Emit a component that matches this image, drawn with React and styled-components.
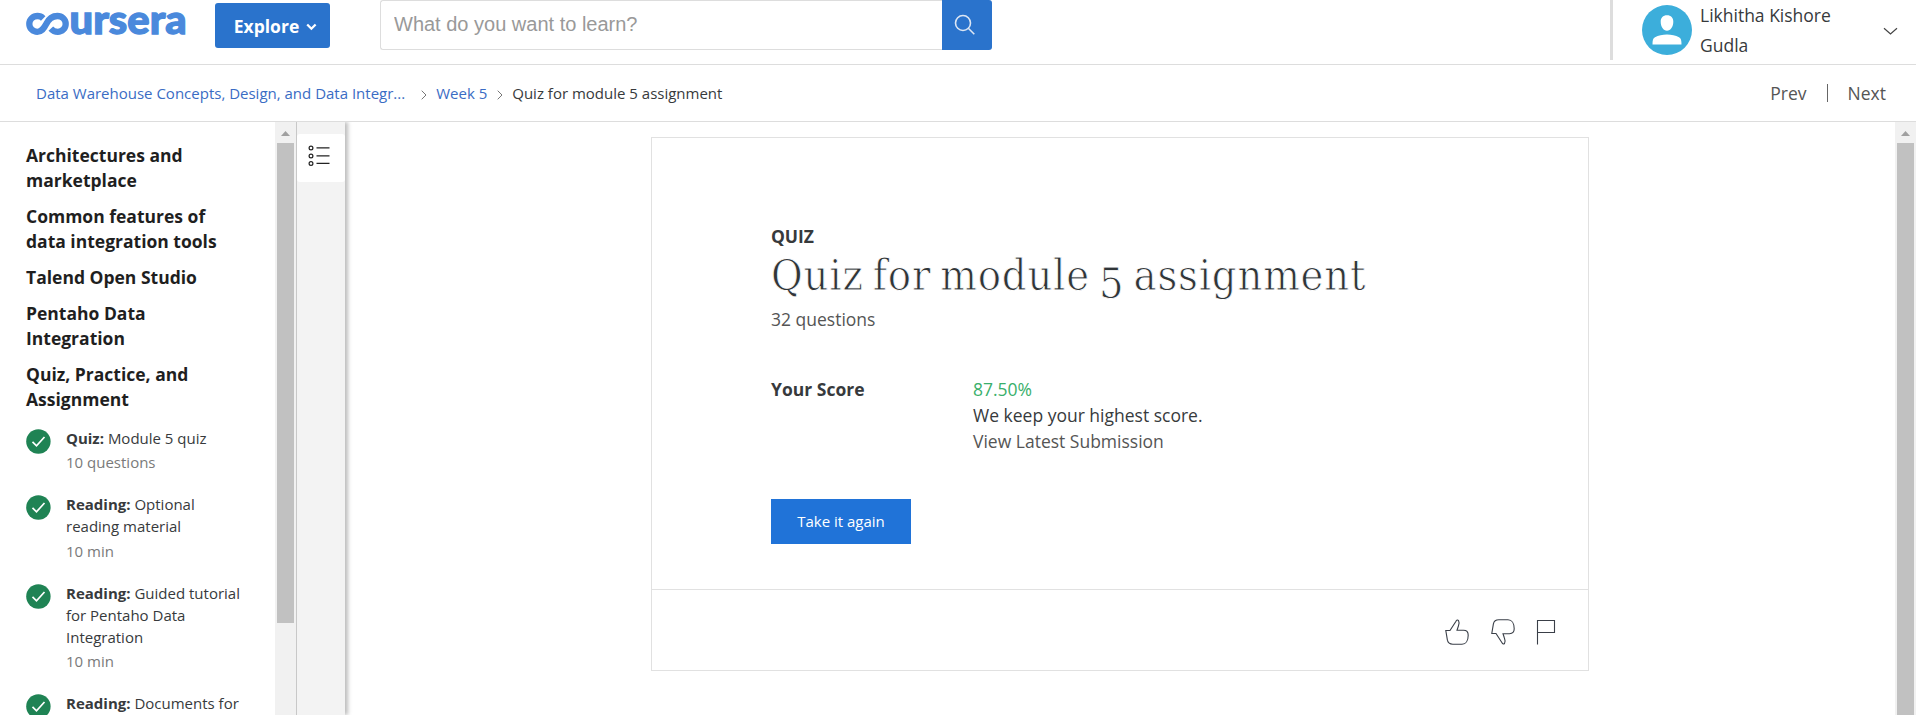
import React from "react";
import styled, { createGlobalStyle } from "styled-components";

const GlobalStyle = createGlobalStyle`
  * { box-sizing: border-box; }
  html, body { margin: 0; height: 100%; overflow: hidden; background: #fff; }
  body { font-family: "Open Sans", sans-serif; color: #373a3c; }
  button { font-family: inherit; border: 0; padding: 0; cursor: pointer; }
`;

const Page = styled.div`
  display: flex;
  flex-direction: column;
  height: 715px;
  overflow: hidden;
`;

const Header = styled.header`
  display: flex;
  align-items: flex-start;
  height: 65px;
  flex: none;
  padding-left: 26px;
  border-bottom: 1px solid #ddd;
`;

const Logo = styled.svg`
  display: block;
  width: 160px;
  height: 24px;
  margin-top: 12px;
  overflow: visible;
`;

const ExploreButton = styled.button`
  display: flex;
  align-items: center;
  justify-content: center;
  gap: 7px;
  width: 115px;
  height: 45px;
  margin: 3px 0 0 29px;
  padding-left: 6px;
  border-radius: 3px;
  background: #2a73cc;
  color: #fff;
  font-size: 17.5px;
  font-weight: 700;
  svg { margin-top: 3px; }
`;

const SearchBar = styled.div`
  display: flex;
  width: 612px;
  height: 50px;
  margin-left: 50px;
`;

const SearchInput = styled.input`
  flex: 1;
  min-width: 0;
  padding: 0 13px 2px;
  border: 1px solid #ddd;
  border-right: 0;
  border-radius: 3px 0 0 3px;
  outline: 0;
  font: 20px "Liberation Sans", Arial, sans-serif;
  &::placeholder { color: #999; opacity: 1; }
`;

const SearchButton = styled.button`
  display: flex;
  align-items: center;
  justify-content: center;
  width: 50px;
  padding-right: 4px;
  border-radius: 0 3px 3px 0;
  background: #2a73cc;
`;

const UserMenu = styled.div`
  display: flex;
  align-items: flex-start;
  width: 306px;
  height: 60px;
  margin-left: auto;
  border-left: 3px solid #ddd;
  padding: 0 18px 0 29px;
`;

const Avatar = styled.svg`
  flex: none;
  margin-top: 5px;
`;

const UserName = styled.span`
  width: 150px;
  margin-left: 8px;
  font-size: 17.5px;
  line-height: 30px;
`;

const MenuArrow = styled.svg`
  margin: 27px 0 0 auto;
`;

const CrumbBar = styled.nav`
  display: flex;
  align-items: center;
  height: 57px;
  flex: none;
  padding: 0 30px 0 36px;
  border-bottom: 1px solid #ddd;
  font-size: 15px;
`;

const Crumb = styled.span`
  color: ${(p) => (p.$link ? "#3a6cc4" : "#373a3c")};
  white-space: nowrap;
`;

const CrumbArrow = styled.svg`
  margin: 3px 9px 0 ${(p) => p.$before}px;
`;

const Pager = styled.div`
  display: flex;
  align-items: center;
  margin-left: auto;
  font-size: 17.5px;
  color: #555;
`;

const PagerDivider = styled.i`
  width: 1px;
  height: 18px;
  margin: 0 20px;
  background: #666;
`;

const Body = styled.div`
  display: flex;
  flex: 1;
  min-height: 0;
`;

const Sidebar = styled.aside`
  display: flex;
  width: 297px;
  flex: none;
  border-right: 1px solid #c8c8c8;
  overflow: hidden;
`;

const Outline = styled.div`
  width: 275px;
  flex: none;
  padding: 21px 20px 0 26px;
`;

const Section = styled.h3`
  width: 205px;
  margin: 0 0 11px;
  font-size: 17.5px;
  font-weight: 700;
  line-height: 25px;
  color: #1f1f1f;
`;

const ItemList = styled.ul`
  margin: 15px 0 0;
  padding: 0;
  list-style: none;
`;

const Item = styled.li`
  display: flex;
  gap: 15px;
  padding-bottom: 20.3px;
  svg { flex: none; margin: 2px 0 0; }
`;

const ItemText = styled.div`
  width: 182px;
  font-size: 15px;
  line-height: 22px;
  b { font-weight: 700; }
`;

const ItemMeta = styled.div`
  margin-top: 2.2px;
  color: #7a7a7a;
`;

const ScrollTrack = styled.div`
  display: flex;
  flex-direction: column;
  align-items: center;
  width: 21px;
  flex: none;
  background: #f1f1f1;
  svg { display: block; flex: none; margin: 9px 0 7px; }
`;

const ScrollThumb = styled.div`
  width: 17px;
  height: ${(p) => p.$height};
  background: #c1c1c1;
`;

const Rail = styled.div`
  width: 48px;
  flex: none;
  padding-top: 12px;
  background: #f3f3f3;
  box-shadow: 3px 0 4px rgba(0, 0, 0, 0.26);
  clip-path: inset(0 -10px 0 0);
`;

const RailTab = styled.button`
  display: flex;
  align-items: center;
  justify-content: center;
  width: 48px;
  height: 48px;
  padding: 0 4px 5px 0;
  border-radius: 3px;
  background: #fff;
`;

const Main = styled.main`
  flex: 1;
  padding: 15px 0 0 306px;
`;

const Card = styled.section`
  display: flex;
  flex-direction: column;
  width: 938px;
  height: 534px;
  border: 1px solid #e1e1e1;
`;

const CardContent = styled.div`
  height: 451px;
  padding: 85px 119px 0;
`;

const Kind = styled.div`
  font-size: 17.5px;
  font-weight: 700;
  letter-spacing: -0.1px;
  line-height: 26px;
`;

const Title = styled.h1`
  height: 55px;
  margin: 0;
  font-family: "DejaVu Serif Condensed", "DejaVu Serif", serif;
  font-stretch: condensed;
  font-size: 43px;
  font-weight: 400;
  line-height: 52px;
  letter-spacing: 0.8px;
  word-spacing: -4px;
  white-space: nowrap;
  color: #303538;
  -webkit-text-stroke: 0.8px #fff;
`;

const OldStyleFigure = styled.span`
  display: inline-block;
  vertical-align: -8px;
  line-height: 1;
`;

const QuestionCount = styled.div`
  margin-top: 2px;
  font-size: 17.5px;
  line-height: 26px;
  color: #555;
`;

const ScoreGrid = styled.div`
  display: grid;
  grid-template-columns: 202px 1fr;
  margin-top: 44px;
  font-size: 17.5px;
  line-height: 26px;
`;

const ScoreLabel = styled.div`
  font-weight: 700;
`;

const ScoreLine = styled.div`
  color: ${(p) => p.$color || "#373a3c"};
`;

const PrimaryButton = styled.button`
  display: block;
  width: 140px;
  height: 45px;
  margin-top: 45px;
  padding-bottom: 2px;
  background: #2073d8;
  color: #fff;
  font-size: 15px;
  font-weight: 500;
`;

const CardFooter = styled.footer`
  display: flex;
  align-items: center;
  justify-content: flex-end;
  flex: 1;
  gap: 21.5px;
  padding: 4px 32px 0 0;
  border-top: 1px solid #e1e1e1;
`;

const sections = [
  "Architectures and marketplace",
  "Common features of data integration tools",
  "Talend Open Studio",
  "Pentaho Data Integration",
  "Quiz, Practice, and Assignment",
];

const items = [
  { kind: "Quiz:", title: "Module 5 quiz", meta: "10 questions" },
  { kind: "Reading:", title: "Optional reading material", meta: "10 min" },
  { kind: "Reading:", title: "Guided tutorial for Pentaho Data Integration", meta: "10 min" },
  { kind: "Reading:", title: "Documents for", meta: "10 min" },
];

function CheckIcon() {
  return (
    <svg width="25" height="25" viewBox="0 0 25 25">
      <circle cx="12.4" cy="12.5" r="12.2" fill="#1f8354" />
      <path d="M6.500 12.800l4 4 8-8.800" fill="none" stroke="#fff" strokeWidth="1.700" />
    </svg>
  );
}

function Scrollbar({ height }) {
  return (
    <ScrollTrack>
      <svg width="9" height="5" viewBox="0 0 9 5">
        <path d="M4.5 0L9 5H0z" fill="#a0a0a0" />
      </svg>
      <ScrollThumb $height={height} />
    </ScrollTrack>
  );
}

function BrandLogo() {
  return (
    <Logo viewBox="0 0 160 24" role="img" aria-label="coursera">
      <path
        d="M17.200 6.400C15.500 4.700 13.400 4 11.500 4C7 4 3.300 7.400 3.300 11.900C3.300 16.400 7 19.800 11.300 19.800C15.600 19.800 17.600 17 20.200 12C22.400 7.500 25.800 4 31.400 4C36 4 39.700 7.400 39.700 11.900C39.700 16.400 36 19.800 31.800 19.800C29 19.800 26.800 18.800 24.800 16.600"
        fill="none"
        stroke="#4a89dc"
        strokeWidth="6.300"
      />
      <text
        x="43.5"
        y="22"
        fontFamily="Lato, sans-serif"
        fontWeight="900"
        fontSize="40"
        fill="#4a89dc"
        stroke="#4a89dc"
        strokeWidth="1.300"
        textLength="117"
        lengthAdjust="spacingAndGlyphs"
      >
        ursera
      </text>
    </Logo>
  );
}

const THUMB =
  "M.8 11.5H5L11 2.2C11.6.9 12.8.6 13.5 1.6C14.3 3 14.2 5 13.4 7L12 11.3H18.5C21.5 11.3 23.2 13.3 23.2 16.2C23.2 21.5 20.8 25.2 17 25.2H7.8C4.4 25.2 3 24 2.4 21.2Z";

export default function App() {
  return (
    <Page>
      <GlobalStyle />
      <Header>
        <BrandLogo />
        <ExploreButton>
          Explore
          <svg width="11" height="8" viewBox="0 0 11 8">
            <path d="M1.2 1.5l4.2 4.2 4.2-4.2" fill="none" stroke="#fff" strokeWidth="2.3" />
          </svg>
        </ExploreButton>
        <SearchBar>
          <SearchInput placeholder="What do you want to learn?" />
          <SearchButton aria-label="Search">
            <svg width="22" height="22" viewBox="0 0 22 22" fill="none" stroke="#dce6f4" strokeWidth="1.6">
              <circle cx="9" cy="9" r="7.5" />
              <path d="M14.3 14.3l6 6" />
            </svg>
          </SearchButton>
        </SearchBar>
        <UserMenu>
          <Avatar width="50" height="50" viewBox="0 0 50 50">
            <circle cx="25" cy="25" r="25" fill="#3caedb" />
            <path d="M25 10.3c4 0 6.3 2.5 6.3 6.5 0 4.700-2.700 9-6.300 9s-6.300-4.300-6.300-9c0-4 2.300-6.500 6.300-6.500zM10.500 39.500c0-4 .4-6.300 2.500-7.300 3.300-1.500 7.500-2.600 12-2.600s8.700 1.100 12 2.600c2.100 1 2.500 3.300 2.500 7.300z" fill="#fff" />
          </Avatar>
          <UserName>Likhitha Kishore Gudla</UserName>
          <MenuArrow width="15" height="9" viewBox="0 0 15 9">
            <path d="M1 1.300l6.500 5.700 6.500-5.700" fill="none" stroke="#444" strokeWidth="1.2" />
          </MenuArrow>
        </UserMenu>
      </Header>

      <CrumbBar>
        <Crumb $link>Data Warehouse Concepts, Design, and Data Integr...</Crumb>
        <CrumbArrow $before={16} width="6" height="10" viewBox="0 0 6 10">
          <path d="M.7.7L5 5 .7 9.300" fill="none" stroke="#777" />
        </CrumbArrow>
        <Crumb $link>Week 5</Crumb>
        <CrumbArrow $before={10} width="6" height="10" viewBox="0 0 6 10">
          <path d="M.7.7L5 5 .7 9.300" fill="none" stroke="#777" />
        </CrumbArrow>
        <Crumb>Quiz for module 5 assignment</Crumb>
        <Pager>
          Prev
          <PagerDivider />
          Next
        </Pager>
      </CrumbBar>

      <Body>
        <Sidebar>
          <Outline>
            {sections.map((s) => (
              <Section key={s}>{s}</Section>
            ))}
            <ItemList>
              {items.map((it) => (
                <Item key={it.title}>
                  <CheckIcon />
                  <ItemText>
                    <b>{it.kind}</b> {it.title}
                    <ItemMeta>{it.meta}</ItemMeta>
                  </ItemText>
                </Item>
              ))}
            </ItemList>
          </Outline>
          <Scrollbar height="480px" />
        </Sidebar>
        <Rail>
          <RailTab aria-label="Outline">
            <svg width="22" height="22" viewBox="0 0 22 22" fill="none" stroke="#222" strokeWidth="1.2">
              <circle cx="3" cy="3" r="1.900" />
              <circle cx="3" cy="11" r="1.900" />
              <circle cx="3" cy="18.500" r="1.900" />
              <path d="M8.500 2.800h13M8.500 10.800h13M8.500 18.400h13" />
            </svg>
          </RailTab>
        </Rail>
        <Main>
          <Card>
            <CardContent>
              <Kind>QUIZ</Kind>
              <Title>
                Quiz for module <OldStyleFigure>5</OldStyleFigure> assignment
              </Title>
              <QuestionCount>32 questions</QuestionCount>
              <ScoreGrid>
                <ScoreLabel>Your Score</ScoreLabel>
                <div>
                  <ScoreLine $color="#3aaf6b">87.50%</ScoreLine>
                  <ScoreLine>We keep your highest score.</ScoreLine>
                  <ScoreLine $color="#555">View Latest Submission</ScoreLine>
                </div>
              </ScoreGrid>
              <PrimaryButton>Take it again</PrimaryButton>
            </CardContent>
            <CardFooter>
              <svg width="24" height="26" viewBox="0 0 24 26" fill="none" stroke="#3a3f48" strokeWidth="1.1">
                <path d={THUMB} />
              </svg>
              <svg width="24" height="26" viewBox="0 0 24 26" fill="none" stroke="#3a3f48" strokeWidth="1.1">
                <path d={THUMB} transform="translate(0 26) scale(1 -1)" />
              </svg>
              <svg width="20" height="26" viewBox="0 0 20 26" fill="none" stroke="#3a3f48" strokeWidth="1.1">
                <path d="M1.500 25.500V1.500H18.500V13.500H1.500" />
              </svg>
            </CardFooter>
          </Card>
        </Main>
        <Scrollbar height="100%" />
      </Body>
    </Page>
  );
}
